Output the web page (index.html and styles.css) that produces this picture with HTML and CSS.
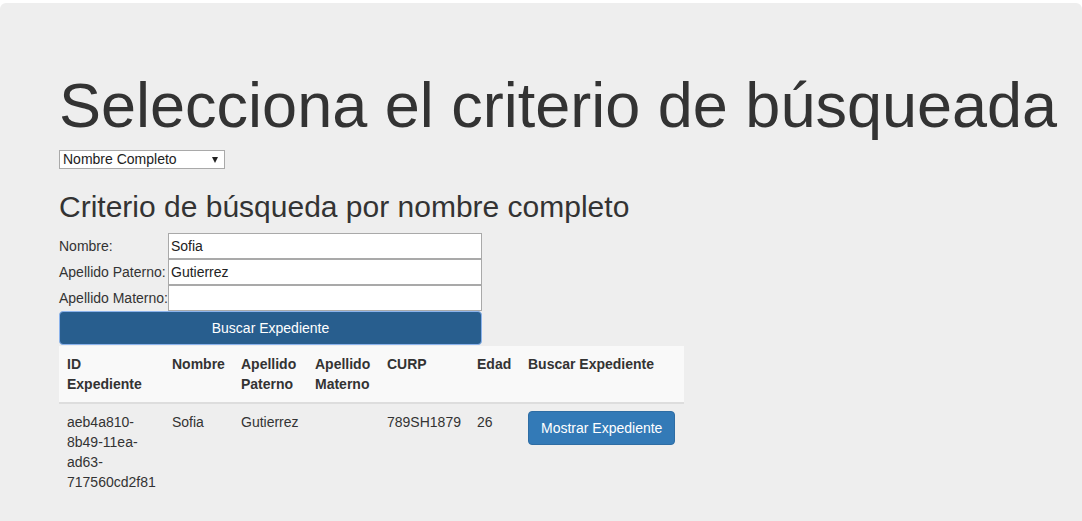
FILE: index.html
```html
<!DOCTYPE html>
<html lang="es">
<head>
<meta charset="utf-8">
<title>Búsqueda de expediente</title>
<link rel="stylesheet" href="styles.css">
</head>
<body>
<div class="page">
  <div class="jumbotron">
    <h1 class="title">Selecciona el criterio de búsqueada</h1>
    <div class="select-wrap">
      <select class="criteria">
        <option>Nombre Completo</option>
        <option>CURP</option>
        <option>ID Expediente</option>
      </select>
    </div>
    <h2 class="subtitle">Criterio de búsqueda por nombre completo</h2>
    <form class="search-form">
      <label class="field-label" for="nombre">Nombre:</label>
      <input class="field-input" id="nombre" type="text" value="Sofia">
      <label class="field-label" for="paterno">Apellido Paterno:</label>
      <input class="field-input" id="paterno" type="text" value="Gutierrez">
      <label class="field-label" for="materno">Apellido Materno:</label>
      <input class="field-input" id="materno" type="text" value="">
      <button type="button" class="btn btn-search">Buscar Expediente</button>
    </form>
    <table class="results">
      <colgroup>
        <col class="c-id"><col class="c-nombre"><col class="c-pat"><col class="c-mat"><col class="c-curp"><col class="c-edad"><col class="c-btn">
      </colgroup>
      <tr class="head-row">
        <th>ID Expediente</th>
        <th>Nombre</th>
        <th>Apellido Paterno</th>
        <th>Apellido Materno</th>
        <th>CURP</th>
        <th>Edad</th>
        <th>Buscar Expediente</th>
      </tr>
      <tr class="body-row">
        <td>aeb4a810-8b49-11ea-ad63-717560cd2f81</td>
        <td>Sofia</td>
        <td>Gutierrez</td>
        <td></td>
        <td>789SH1879</td>
        <td>26</td>
        <td><button type="button" class="btn btn-show">Mostrar Expediente</button></td>
      </tr>
    </table>
  </div>
</div>
</body>
</html>
```

FILE: styles.css
```css
* { box-sizing: border-box; }

html, body {
  margin: 0;
  padding: 0;
  background: #fff;
}

body {
  font-family: "Liberation Sans", Arial, Helvetica, sans-serif;
  font-size: 14px;
  line-height: 20px;
  color: #333;
}

.page {
  padding-top: 3px;
}

.jumbotron {
  background: #eee;
  border-radius: 6px;
  padding: 48px 59px;
}

.title {
  font-size: 63px;
  line-height: 1.1;
  font-weight: normal;
  margin: 20px 0 10px;
  white-space: nowrap;
}

.select-wrap {
  position: relative;
  width: 166px;
  height: 19px;
  margin-top: 1px;
}

.select-wrap::after {
  content: "";
  position: absolute;
  right: 7px;
  top: 7px;
  border-left: 3.5px solid transparent;
  border-right: 3.5px solid transparent;
  border-top: 6px solid #222;
  pointer-events: none;
}

.criteria {
  appearance: none;
  -webkit-appearance: none;
  display: block;
  width: 166px;
  height: 19px;
  margin: 0;
  padding: 0 0 0 3px;
  border: 1px solid #a9a9a9;
  border-radius: 0;
  background: #fff;
  font-family: "Liberation Sans", Arial, sans-serif;
  font-size: 14px;
  line-height: 17px;
  color: #222;
}

.subtitle {
  font-size: 30px;
  line-height: 1.1;
  font-weight: normal;
  margin: 21px 0 10px;
}

.search-form {
  display: grid;
  grid-template-columns: 109px 314px;
  grid-template-rows: 26px 26px 26px 34px;
  align-items: center;
  margin: 0;
}

.field-label {
  font-size: 14px;
  line-height: 20px;
  white-space: nowrap;
}

.field-input {
  display: block;
  width: 314px;
  height: 26px;
  margin: 0;
  padding: 2px 2px;
  border: 1px solid #a9a9a9;
  background: #fff;
  font-family: "Liberation Sans", Arial, sans-serif;
  font-size: 14px;
  line-height: 20px;
  color: #222;
  outline: none;
}

.btn {
  display: inline-block;
  font-family: "Liberation Sans", Arial, sans-serif;
  font-size: 14px;
  line-height: 20px;
  padding: 6px 12px;
  border-radius: 4px;
  color: #fff;
  text-align: center;
  white-space: nowrap;
  cursor: pointer;
}

.btn-search {
  grid-column: 1 / span 2;
  height: 34px;
  width: 423px;
  background: #285e8e;
  border: 1px solid #8bb3ec;
  box-shadow: inset 0 0 0 1px #2a5f8f;
}

.results {
  border-collapse: collapse;
  table-layout: fixed;
  width: 625px;
  margin-top: 1px;
}

.c-id { width: 105px; }
.c-nombre { width: 69px; }
.c-pat { width: 74px; }
.c-mat { width: 72px; }
.c-curp { width: 90px; }
.c-edad { width: 51px; }
.c-btn { width: 164px; }

.results th,
.results td {
  padding: 8px;
  text-align: left;
  vertical-align: top;
  line-height: 20px;
}

.results th {
  font-weight: bold;
}

.head-row {
  background: #f9f9f9;
  border-bottom: 2px solid #ddd;
}

.btn-show {
  margin-top: -1px;
  background: #337ab7;
  border: 1px solid #2e6da4;
}
```
